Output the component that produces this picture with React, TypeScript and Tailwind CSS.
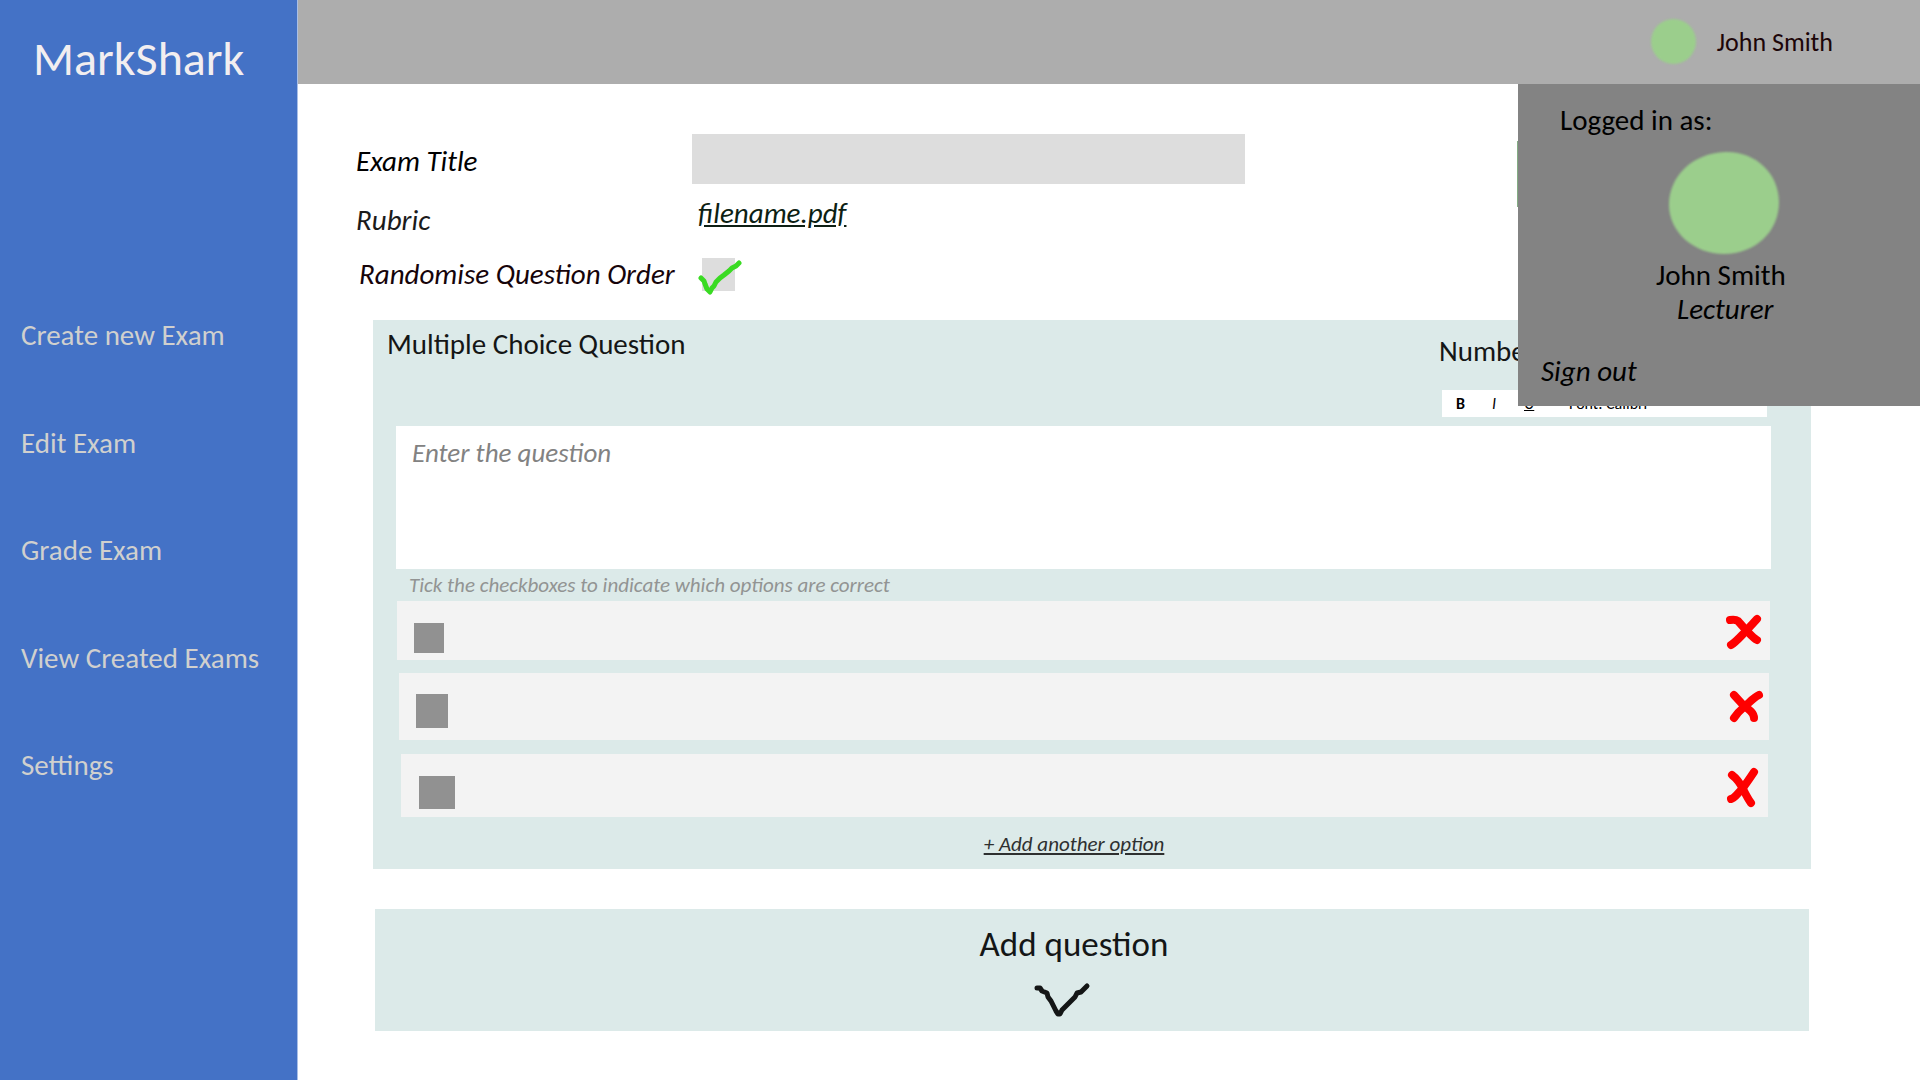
import React from "react";

const navItems = ["Create new Exam", "Edit Exam", "Grade Exam", "View Created Exams", "Settings"];

const options = [
  {
    id: "option-1",
    row: "ml-6 mr-[41px] h-[59px] pt-[22px] pl-[17px]",
    box: "h-[30px] w-[30px]",
    cross: "mr-2 -mt-2",
    strokes: ["M6 7 C9 6.5 12 6.5 14 8 L21 16 C26 21 29 25 33 27", "M33 6 L22 18 C17 23 12 29 7 32"],
  },
  {
    id: "option-2",
    row: "ml-[26px] mr-[42px] mt-[13px] h-[67px] pt-[21px] pl-[17px]",
    box: "h-[34px] w-8",
    cross: "mr-[5px] -mt-1",
    strokes: ["M8 7 L18 18 C24 22 28 25 28 30", "M33 7 C28 9 23 15 18 19 C12 24 10 27 8 30"],
  },
  {
    id: "option-3",
    row: "ml-7 mr-[43px] mt-3.5 h-[63px] pt-[22px] pl-[18px]",
    box: "h-[33px] w-9",
    cross: "mr-[7px] -mt-[9px]",
    strokes: ["M9 10 C13 13 17 18 20 24 C23 30 25 34 28 38", "M31 7 C27 13 23 19 19 24 C14 29 12 33 8 34"],
  },
];

function Sidebar() {
  return (
    <aside className="flex w-[298px] shrink-0 flex-col border-r border-[#a9bfe6] bg-[#4472c6]">
      <h1 className="pt-[29px] pl-[33px] text-[48px] leading-[60px] text-[#f2eef0]">MarkShark</h1>
      <nav className="mt-[229px] flex h-[464px] flex-col justify-between pl-[21px] text-[29px] leading-[34px] text-[#d0d0ce]">
        {navItems.map((item) => (
          <a key={item} href="#">
            {item}
          </a>
        ))}
      </nav>
    </aside>
  );
}

function UserMenu() {
  return (
    <div className="absolute top-full right-0 z-10 flex h-[322px] w-[402px] flex-col bg-[#838383] text-[29px] leading-[34px] text-black">
      <p className="pt-[19px] pl-[42px]">Logged in as:</p>
      <svg className="mt-2.5 ml-[146px] h-[112px] w-[120px] shrink-0 blur-[1px]" viewBox="0 0 120 112" aria-hidden="true">
        <path
          d="M61 5 C91 4 115 26 115 55 C115 85 91 107 60 107 C30 107 5 85 5 58 C5 29 29 6 61 5 Z"
          fill="#9bce8c"
        />
      </svg>
      <p className="-mt-px ml-[138px]">John Smith</p>
      <p className="ml-[159px] italic">Lecturer</p>
      <button type="button" className="mt-7 ml-[23px] self-start italic">
        Sign out
      </button>
    </div>
  );
}

function Header() {
  return (
    <header className="relative flex h-[84px] justify-end bg-[#adadad]">
      <button type="button" className="mr-[87px] flex items-center gap-[21px] text-[26px] leading-8 text-[#1c0508]">
        <span className="-mt-0.5 h-[45px] w-[45px] rounded-full bg-[#9bce8c] blur-[1px]" />
        John Smith
      </button>
      <UserMenu />
    </header>
  );
}

function ExamDetails() {
  return (
    <div className="flex items-start justify-between pl-[58px]">
      <div className="text-[29px] leading-[34px] text-black italic">
        <div className="flex items-center">
          <label htmlFor="exam-title" className="w-[336px] pt-1">
            Exam Title
          </label>
          <input id="exam-title" type="text" className="h-[50px] w-[553px] bg-[#dddddd] px-3 outline-none" />
        </div>
        <div className="flex h-[73px] items-start">
          <span className="w-[342px] pt-[19px] text-[#1b1b1b]">Rubric</span>
          <a href="#" className="pt-3 text-[#0d1f14] underline">
            filename.pdf
          </a>
        </div>
        <div className="flex items-center">
          <label htmlFor="randomise" className="w-[346px] pl-[3px] text-[#16040a]">
            Randomise Question Order
          </label>
          <span className="relative h-[33px] w-[33px]">
            <input id="randomise" type="checkbox" defaultChecked className="peer block h-full w-full appearance-none bg-[#dddddd]" />
            <svg
              className="pointer-events-none absolute -top-1 -left-1 hidden h-11 w-12 peer-checked:block"
              viewBox="0 0 48 44"
              fill="none"
              stroke="#3adb23"
              strokeWidth="5"
              strokeLinecap="round"
              strokeLinejoin="round"
              aria-hidden="true"
            >
              <path d="M3 24 L6 27 L7 30 L9 35 L12 38 L14 34 L16 32 L18 28 L22 24 L26 21 L31 17 L34 14 L38 12 L41 9" />
            </svg>
          </span>
        </div>
      </div>
      <button type="button" aria-label="Save exam" className="mt-[7px] mr-[109px] h-[66px] w-[294px] bg-[#84ad84]" />
    </div>
  );
}

function QuestionCard() {
  return (
    <section className="mt-[29px] mr-[109px] ml-[75px] bg-[#dceae9] text-[#141616]">
      <div className="flex justify-between">
        <h2 className="pt-[7px] pl-[14px] text-[29px] leading-[34px]">Multiple Choice Question</h2>
        <div className="mr-11 mb-[9px] w-[328px] pt-3.5">
          <p className="text-[29px] leading-[34px]">Number</p>
          <div className="mt-[22px] ml-[3px] flex h-[27px] items-center bg-white pl-3.5 text-[16px] leading-6 text-black">
            <button type="button" className="w-9 text-left font-bold">
              B
            </button>
            <button type="button" className="w-8 text-left italic">
              I
            </button>
            <button type="button" className="w-[45px] text-left underline">
              U
            </button>
            <button type="button">Font: Calibri</button>
          </div>
        </div>
      </div>
      <div className="mr-10 ml-[23px]">
        <textarea
          aria-label="Question text"
          placeholder="Enter the question"
          className="block h-[143px] w-full resize-none bg-white px-4 py-2.5 text-[27px] leading-[34px] italic outline-none placeholder:text-[#828282]"
        />
      </div>
      <p className="pl-9 text-[21px] leading-8 text-[#929493] italic">
        Tick the checkboxes to indicate which options are correct
      </p>
      {options.map((option, index) => (
        <div key={option.id} className={`flex items-start justify-between bg-[#f3f3f3] ${option.row}`}>
          <input
            type="checkbox"
            aria-label={`Option ${index + 1} is correct`}
            className={`appearance-none bg-[#919191] checked:bg-[#3adb23] ${option.box}`}
          />
          <button type="button" aria-label={`Remove option ${index + 1}`} className={option.cross}>
            <svg
              className="h-10 w-9 overflow-visible"
              viewBox="2 2 36 40"
              fill="none"
              stroke="#fe0000"
              strokeWidth="8"
              strokeLinecap="round"
              aria-hidden="true"
            >
              {option.strokes.map((d) => (
                <path key={d} d={d} />
              ))}
            </svg>
          </button>
        </div>
      ))}
      <div className="flex justify-center pt-[13px] pr-9 pb-[11px]">
        <button type="button" className="text-[21px] leading-7 text-[#2e3030] italic underline">
          + Add another option
        </button>
      </div>
    </section>
  );
}

function AddQuestion() {
  return (
    <button
      type="button"
      className="mt-10 mr-[111px] ml-[77px] flex h-[122px] flex-col items-center bg-[#dceae9] pt-[15px] pr-9 text-[35px] leading-10 text-[#141616]"
    >
      Add question
      <svg
        className="mt-4 h-10 w-20"
        viewBox="0 0 80 40"
        fill="none"
        stroke="currentColor"
        strokeWidth="5"
        strokeLinecap="round"
        strokeLinejoin="round"
        aria-hidden="true"
      >
        <path d="M3 8 L6 8 L8 11 L13 13 L14 17 L17 21 L19 25 L22 31 L24 34 L26 34 L28 30 L32 26 L37 21 L41 17 L43 13 L47 12 L53 6" />
      </svg>
    </button>
  );
}

export default function App() {
  return (
    <div className="flex min-h-screen bg-white font-[Carlito,Calibri,Lato,sans-serif]">
      <Sidebar />
      <div className="flex min-w-0 flex-1 flex-col">
        <Header />
        <main className="flex flex-col pt-[50px]">
          <ExamDetails />
          <QuestionCard />
          <AddQuestion />
        </main>
      </div>
    </div>
  );
}
